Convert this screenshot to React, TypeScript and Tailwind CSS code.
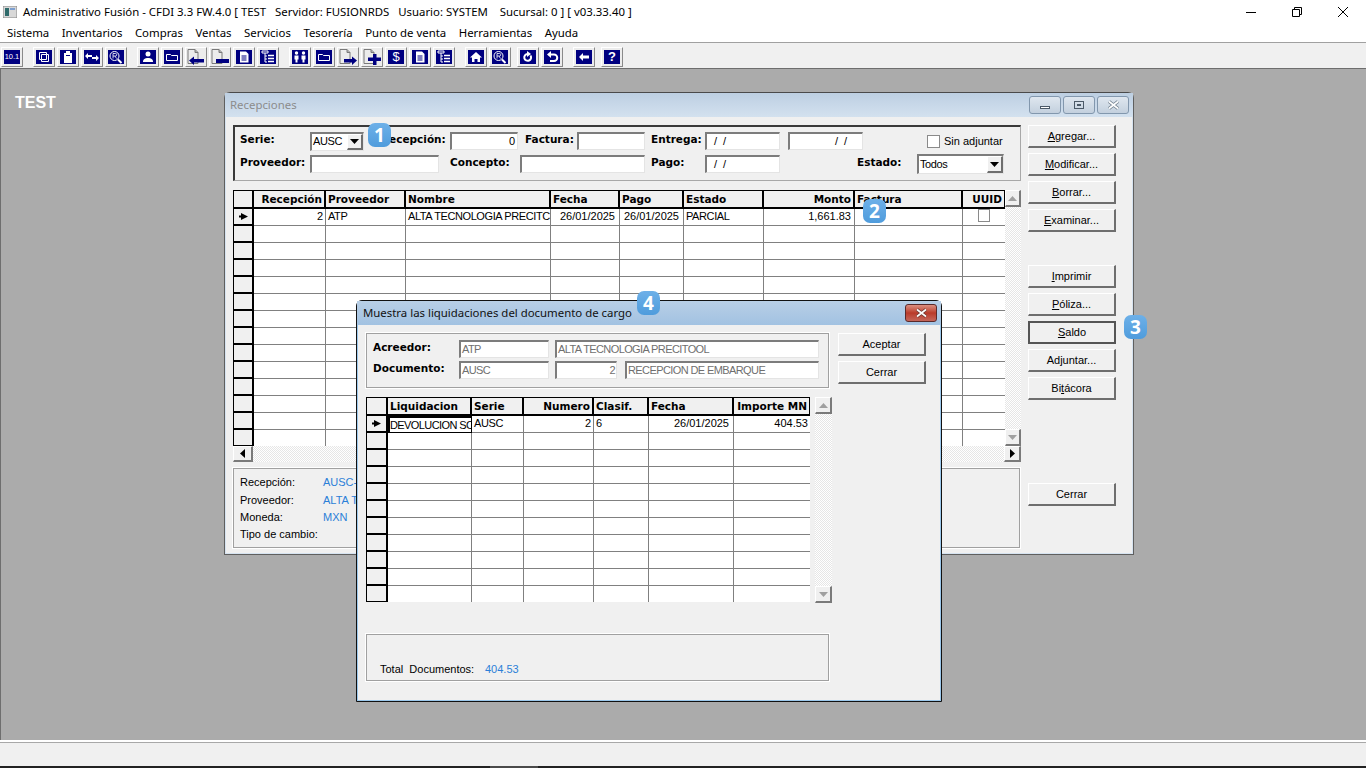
import type { ReactNode } from 'react';

const NAVY = '#000080';

type Col = { label: string; right?: boolean };

const mainCols: Col[] = [
  { label: 'Recepción', right: true },
  { label: 'Proveedor' },
  { label: 'Nombre' },
  { label: 'Fecha' },
  { label: 'Pago' },
  { label: 'Estado' },
  { label: 'Monto', right: true },
  { label: 'Factura' },
  { label: 'UUID', right: true },
];

const dlgCols: Col[] = [
  { label: 'Liquidacion' },
  { label: 'Serie' },
  { label: 'Numero', right: true },
  { label: 'Clasif.' },
  { label: 'Fecha' },
  { label: 'Importe MN', right: true },
];

// toolbar icons, navy tile with white strokes unless the icon is a page
function NavyTile({ children }: { children: ReactNode }) {
  return (
    <svg width="16" height="14" viewBox="0 0 16 14" fill="none">
      <rect width="16" height="14" fill={NAVY} />
      {children}
    </svg>
  );
}

function PageIcon({ kind }: { kind: 'left' | 'bar' | 'right' | 'plus' }) {
  return (
    <svg width="18" height="16" viewBox="0 0 18 16">
      <path d="M1 .5h7l3 3v11H1z" fill="#ececec" stroke="#7a7a7a" strokeWidth="1" />
      <path d="M8 .5v3h3" fill="#b0b0b0" stroke="#7a7a7a" strokeWidth="1" />
      {kind === 'left' && <path d="M2 11.5l5-4v2.5h10v3.5H7V16z" fill={NAVY} />}
      {kind === 'bar' && <rect x="5" y="10" width="13" height="4" fill={NAVY} />}
      {kind === 'right' && <path d="M18 11.5l-5-4v2.5H5v3.5h8V16z" fill={NAVY} />}
      {kind === 'plus' && <path d="M10 5h3.5v3.5H18V12h-4.5v4H10v-4H5V8.500h5z" fill={NAVY} />}
    </svg>
  );
}

const W = { stroke: '#fff', strokeWidth: 1 };

const icons: Record<string, ReactNode> = {
  ver: (
    <div className="flex h-[14px] w-[16px] items-center justify-center bg-[#000080] text-[7.5px] leading-none text-white">10.1</div>
  ),
  copy: (
    <NavyTile>
      <path d="M3.5 2.5h7v2h2v7h-7v-2h-2zM5.5 4.5h5v5h-5z" {...W} />
    </NavyTile>
  ),
  clip: (
    <NavyTile>
      <path d="M4 3h2V1h4v2h2v10H4z" fill="#fff" />
      <rect x="6" y="5" width="4" height="1" fill={NAVY} />
    </NavyTile>
  ),
  swap: (
    <NavyTile>
      <path d="M1 6l3-3v2h4v2H4v2zM15 8l-3-3v2H8v2h4v2z" fill="#fff" />
    </NavyTile>
  ),
  find: (
    <NavyTile>
      <circle cx="6.5" cy="6" r="4.5" {...W} />
      <path d="M5 8.5v-5h2.5a1 1 0 0 1 0 2.500H5M7 6l1.500 2.500" stroke="#fff" strokeWidth="0.8" />
      <path d="M10 9.5l3.500 3.500" stroke="#fff" strokeWidth="2" />
    </NavyTile>
  ),
  person: (
    <NavyTile>
      <circle cx="8" cy="4" r="2.5" fill="#fff" />
      <path d="M3 12c0-3 2-4 5-4s5 1 5 4z" fill="#fff" />
    </NavyTile>
  ),
  folder: (
    <NavyTile>
      <path d="M2.5 4.5v6h11v-5h-6l-1-1z" {...W} />
    </NavyTile>
  ),
  pageLeft: <PageIcon kind="left" />,
  pageBar: <PageIcon kind="bar" />,
  pageRight: <PageIcon kind="right" />,
  pagePlus: <PageIcon kind="plus" />,
  doc: (
    <NavyTile>
      <path d="M4 1.5h6l2.500 2.500v8.500H4z" fill="#fff" />
      <path d="M5.5 6h5M5.5 8h5M5.5 10h5" stroke={NAVY} />
    </NavyTile>
  ),
  tree: (
    <NavyTile>
      <path d="M2 1h6v2H2zM5 3v9M5 6h2M5 9h2M5 12h2" stroke="#fff" strokeWidth="1" />
      <path d="M8 5.5h6M8 8.500h6M8 11.500h6" stroke="#fff" strokeWidth="1.5" />
    </NavyTile>
  ),
  people: (
    <NavyTile>
      <circle cx="4.5" cy="3" r="1.7" fill="#fff" />
      <circle cx="11.5" cy="3" r="1.7" fill="#fff" />
      <path d="M2.5 5.500h4v4h-1v3h-2v-3h-1zM9.500 5.500h4v4h-1v3h-2v-3h-1z" fill="#fff" />
    </NavyTile>
  ),
  dollar: (
    <div className="flex h-[14px] w-[16px] items-center justify-center bg-[#000080] text-[13px] leading-none text-white">$</div>
  ),
  home: (
    <NavyTile>
      <path d="M8 2l6 5.500h-2V12H9.500V9h-3v3H4V7.500H2z" fill="#fff" />
    </NavyTile>
  ),
  redo: (
    <NavyTile>
      <path d="M10.5 5.500a3.400 3.400 0 1 1-3-1.500" stroke="#fff" strokeWidth="2" />
      <path d="M7 1l4 3-4 3z" fill="#fff" />
    </NavyTile>
  ),
  undo: (
    <NavyTile>
      <path d="M5 4.500h5a2.500 2.500 0 0 1 0 6.500H6" stroke="#fff" strokeWidth="2" />
      <path d="M7 1L3 4.500 7 8z" fill="#fff" />
    </NavyTile>
  ),
  back: (
    <NavyTile>
      <path d="M3 7l4-4v2.500h6v3H7V11z" fill="#fff" />
    </NavyTile>
  ),
  help: (
    <div className="flex h-[14px] w-[16px] items-center justify-center bg-[#000080] text-[13px] font-bold leading-none text-white">?</div>
  ),
};

const toolbarGroups: { ml: string; items: string[] }[] = [
  { ml: 'ml-0', items: ['ver'] },
  { ml: 'ml-2', items: ['copy', 'clip', 'swap', 'find'] },
  { ml: 'ml-2', items: ['person', 'folder', 'pageLeft', 'pageBar', 'doc', 'tree'] },
  { ml: 'ml-2', items: ['people', 'folder', 'pageRight', 'pagePlus', 'dollar', 'doc', 'tree'] },
  { ml: 'ml-2', items: ['home', 'find'] },
  { ml: 'ml-1', items: ['redo', 'undo'] },
  { ml: 'ml-2', items: ['back'] },
  { ml: 'ml-1', items: ['help'] },
];

function Triangle({ dir, grey }: { dir: 'up' | 'down' | 'left' | 'right'; grey?: boolean }) {
  const d = { up: 'M0 5L4.5 0 9 5z', down: 'M0 0h9L4.5 5z', left: 'M5 0v9L0 4.5z', right: 'M0 0v9l5-4.5z' }[dir];
  const vertical = dir === 'up' || dir === 'down';
  return (
    <svg width={vertical ? 9 : 5} height={vertical ? 5 : 9} viewBox={vertical ? '0 0 9 5' : '0 0 5 9'}>
      <path d={d} fill={grey ? '#a0a0a0' : '#000'} />
    </svg>
  );
}

function ScrollBtn({ dir, grey, className }: { dir: 'up' | 'down' | 'left' | 'right'; grey?: boolean; className: string }) {
  return (
    <div className={`flex shrink-0 items-center justify-center border-l border-t border-white border-r-2 border-b-2 border-r-[#7a7a7a] border-b-[#7a7a7a] bg-[#f0f0f0] ${className}`}>
      <Triangle dir={dir} grey={grey} />
    </div>
  );
}

function Hatch({ className }: { className: string }) {
  return <div className={`bg-[repeating-conic-gradient(#e6e6e6_0_25%,#ffffff_0_50%)] bg-[length:2px_2px] ${className}`} />;
}

function Btn({ children, focus, className = '' }: { children: ReactNode; focus?: boolean; className?: string }) {
  return (
    <div
      className={`flex h-[23px] w-[88px] items-center justify-center bg-[#f0f0f0] text-[11px] text-black ${
        focus
          ? 'border-2 border-[#555555]'
          : 'border-l border-t border-white border-r-2 border-b-2 border-r-[#6e6e6e] border-b-[#6e6e6e]'
      } ${className}`}
    >
      <span>{children}</span>
    </div>
  );
}

function Label({ w, children }: { w: string; children: ReactNode }) {
  return <div className={`${w} shrink-0 pb-[2px] font-['DejaVu_Sans'] text-[10.5px] font-bold text-black`}>{children}</div>;
}

function Input({ w, children, cls = '' }: { w: string; children?: ReactNode; cls?: string }) {
  return (
    <div className={`${w} flex h-[18px] shrink-0 items-center overflow-hidden whitespace-nowrap border-l-2 border-t-2 border-[#7c7c7c] border-r border-b border-r-[#e4e4e4] border-b-[#e4e4e4] bg-white text-[11px] ${cls}`}>
      {children}
    </div>
  );
}

function Combo({ w, h, text }: { w: string; h: string; text: string }) {
  return (
    <div className={`${w} ${h} flex shrink-0 items-center border-l-2 border-t-2 border-[#7c7c7c] border-r border-b border-r-[#e4e4e4] border-b-[#e4e4e4] bg-white text-[11px] tracking-[-0.4px]`}>
      <span className="flex-1 pl-[1px]">{text}</span>
      <div className="flex h-full w-[16px] items-center justify-center border-l border-t border-white border-r-2 border-b-2 border-r-[#6e6e6e] border-b-[#6e6e6e] bg-[#f0f0f0]">
        <Triangle dir="down" />
      </div>
    </div>
  );
}

function Cell({ right, children, cls = '' }: { right?: boolean; children?: ReactNode; cls?: string }) {
  return (
    <div className={`flex h-[17px] items-center overflow-hidden whitespace-nowrap border-b border-r border-[#808080] pb-[2px] pl-[2px] pr-[2px] text-[11px] ${right ? 'justify-end' : ''} ${cls}`}>
      {children}
    </div>
  );
}

function HeadRow({ cols, grid }: { cols: Col[]; grid: string }) {
  return (
    <div className={`grid h-[19px] ${grid} border-t border-black`}>
      <div className="border-b-2 border-r-2 border-black bg-[#f0f0f0]" />
      {cols.map((c) => (
        <div
          key={c.label}
          className={`flex items-center overflow-hidden whitespace-nowrap border-b-2 border-r-2 border-black bg-[#f0f0f0] pl-[2px] pr-[2px] pt-[1px] font-['DejaVu_Sans'] text-[10.5px] font-bold ${c.right ? 'justify-end' : ''}`}
        >
          {c.label}
        </div>
      ))}
    </div>
  );
}

function RowHead({ current }: { current?: boolean }) {
  return (
    <div className="flex h-[17px] items-center justify-center border-b-2 border-r-2 border-black bg-[#f0f0f0]">
      {current && (
        <svg width="9" height="7" viewBox="0 0 9 7">
          <path d="M0 2.5h2V0l7 3.5L2 7V4.5H0z" fill="#000" />
        </svg>
      )}
    </div>
  );
}

function EmptyRows({ count, grid, cols }: { count: number; grid: string; cols: number }) {
  return (
    <>
      {Array.from({ length: count }).map((_, r) => (
        <div key={r} className={`grid ${grid}`}>
          <RowHead />
          {Array.from({ length: cols }).map((_, c) => (
            <Cell key={c} cls={c === cols - 1 ? 'border-r-0' : ''} />
          ))}
        </div>
      ))}
    </>
  );
}

function Badge({ n, cls }: { n: number; cls: string }) {
  return (
    <div className={`absolute z-20 flex h-[24px] w-[23px] items-center justify-center rounded-[7px] bg-gradient-to-b from-[#6db0e8] to-[#4f9cdc] font-['Open_Sans'] text-[19px] font-bold text-white ${cls}`}>
      {n}
    </div>
  );
}

function Panel({ children, cls }: { children: ReactNode; cls: string }) {
  return <div className={`border border-[#a0a0a0] outline outline-1 outline-white ${cls}`}>{children}</div>;
}

function CloseGlyph({ outline }: { outline: string }) {
  return (
    <svg width="13" height="10" viewBox="0 0 13 10">
      <path d="M2 1.5l9 7M11 1.5l-9 7" stroke={outline} strokeWidth="3.4" />
      <path d="M2 1.5l9 7M11 1.5l-9 7" stroke="#fff" strokeWidth="1.6" />
    </svg>
  );
}

function MainWindow() {
  const grid = 'grid-cols-[20px_72px_80px_145px_69px_64px_80px_91px_108px_43px]';
  return (
    <div className="absolute left-[223px] top-[23px] h-[463px] w-[910px] rounded-t-[6px] border border-[#5f5f5f] border-t-[#4a4a4a] bg-[#d6e3f0] p-0">
      <div className="flex h-[24px] items-center justify-between bg-gradient-to-b from-[#bdcfe2] to-[#d3e1ef] pl-[5px] pr-[4px] text-[#8c8c8c]">
        <span className="font-['Noto_Sans'] text-[11.4px]">Recepciones</span>
        <div className="mb-[1px] flex gap-[2px]">
          {['min', 'max', 'close'].map((k) => (
            <div key={k} className="flex h-[18px] w-[32px] items-center justify-center rounded-[3px] border border-[#8297ad] bg-gradient-to-b from-[#dfe7ef] to-[#c3d0de]">
              {k === 'min' && <div className="mt-[6px] h-[3px] w-[10px] border border-[#4c5a68] bg-white" />}
              {k === 'max' && (
                <div className="flex h-[8px] w-[10px] items-center justify-center border border-[#4c5a68]">
                  <div className="h-[2px] w-[4px] bg-[#4c5a68]" />
                </div>
              )}
              {k === 'close' && <CloseGlyph outline="#71808f" />}
            </div>
          ))}
        </div>
      </div>

      <div className="mx-[1px] flex h-[436px] bg-[#f0f0f0] pl-[7px] pt-[8px]">
        <div className="w-[788px] shrink-0">
          {/* filtros */}
          <div className="h-[56px] border-l-2 border-t-2 border-[#3a3a3a] border-r border-b border-r-[#a8a8a8] border-b-[#a8a8a8] pl-[5px] pt-[5px]">
            <div className="flex h-[18px] items-center">
              <Label w="w-[70px]">Serie:</Label>
              <Combo w="w-[54px]" h="h-[19px]" text="AUSC" />
              <Label w="w-[69px] ml-[17px]">Recepción:</Label>
              <Input w="w-[68px]" cls="justify-end pr-[2px]">0</Input>
              <Label w="w-[52px] ml-[7px]">Factura:</Label>
              <Input w="w-[68px]" />
              <Label w="w-[54px] ml-[6px]">Entrega:</Label>
              <Input w="w-[75px]" cls="pl-[7px] tracking-[1.5px]">/ /</Input>
              <Input w="w-[75px] ml-[8px]" cls="pl-[45px] tracking-[1.5px]">/ /</Input>
              <div className="ml-[64px] h-[13px] w-[13px] border border-[#8a8a8a] bg-white" />
              <span className="ml-[4px] pt-[1px] text-[11px]">Sin adjuntar</span>
            </div>
            <div className="mt-[5px] flex h-[18px] items-center">
              <Label w="w-[70px]">Proveedor:</Label>
              <Input w="w-[129px]" />
              <Label w="w-[70px] ml-[11px]">Concepto:</Label>
              <Input w="w-[125px]" />
              <Label w="w-[54px] ml-[6px]">Pago:</Label>
              <Input w="w-[75px]" cls="pl-[7px] tracking-[1.5px]">/ /</Input>
              <Label w="w-[60px] ml-[77px]">Estado:</Label>
              <Combo w="w-[87px]" h="h-[20px]" text="Todos" />
            </div>
          </div>

          {/* rejilla */}
          <div className="mt-[9px] h-[272px]">
            <div className="flex h-[256px]">
              <div className="h-[256px] w-[772px] shrink-0 overflow-hidden border-l border-black bg-white">
                <HeadRow cols={mainCols} grid={grid} />
                <div className={`grid ${grid}`}>
                  <RowHead current />
                  <Cell right>2</Cell>
                  <Cell cls="tracking-[-0.4px]">ATP</Cell>
                  <Cell cls="tracking-[-0.4px]">ALTA TECNOLOGIA PRECITC</Cell>
                  <Cell right cls="pr-[4px]!">26/01/2025</Cell>
                  <Cell right cls="pr-[4px]!">26/01/2025</Cell>
                  <Cell cls="tracking-[-0.4px]">PARCIAL</Cell>
                  <Cell right cls="pr-[3px]!">1,661.83</Cell>
                  <Cell />
                  <Cell cls="border-r-0 justify-center pb-0!">
                    <div className="mb-[3px] mr-[2px] h-[13px] w-[12px] border border-[#8a8a8a] bg-white" />
                  </Cell>
                </div>
                <EmptyRows count={14} grid={grid} cols={9} />
              </div>
              <div className="flex w-[16px] flex-col">
                <ScrollBtn dir="up" grey className="h-[17px] w-[16px]" />
                <Hatch className="flex-1" />
                <ScrollBtn dir="down" grey className="h-[17px] w-[16px]" />
              </div>
            </div>
            <div className="flex h-[16px]">
              <ScrollBtn dir="left" className="h-[16px] w-[20px]" />
              <Hatch className="flex-1" />
              <ScrollBtn dir="right" className="h-[16px] w-[17px]" />
            </div>
          </div>

          {/* totales */}
          <Panel cls="mt-[6px] h-[80px] w-[787px] pl-[6px] pt-[5px] text-[11px]">
            {[
              ['Recepción:', 'AUSC-'],
              ['Proveedor:', 'ALTA T'],
              ['Moneda:', 'MXN'],
              ['Tipo de cambio:', ''],
            ].map(([k, v]) => (
              <div key={k} className="flex h-[17.3px] items-center">
                <span className="w-[83px]">{k}</span>
                <span className="text-[#2b7fd8]">{v}</span>
              </div>
            ))}
          </Panel>
        </div>

        {/* botones */}
        <div className="ml-[7px] flex w-[88px] flex-col">
          <Btn><u>A</u>gregar...</Btn>
          <Btn className="mt-[5px]"><u>M</u>odificar...</Btn>
          <Btn className="mt-[5px]"><u>B</u>orrar...</Btn>
          <Btn className="mt-[5px]"><u>E</u>xaminar...</Btn>
          <Btn className="mt-[33px]"><u>I</u>mprimir</Btn>
          <Btn className="mt-[5px]"><u>P</u>óliza...</Btn>
          <Btn focus className="mt-[5px]"><u>S</u>aldo</Btn>
          <Btn className="mt-[5px]">Adjuntar...</Btn>
          <Btn className="mt-[5px]">Bi<u>t</u>ácora</Btn>
          <Btn className="mt-[83px]">Cerrar</Btn>
        </div>
      </div>
    </div>
  );
}

function Dialog() {
  const grid = 'grid-cols-[21px_84px_52px_70px_55px_85px_77px]';
  const disabled = 'px-[1px] text-[#6f6f6f] tracking-[-0.6px]';
  return (
    <div className="absolute left-[355px] top-[231px] z-10 h-[402px] w-[586px] rounded-t-[6px] border border-[#111111] bg-[#9cc8ec]">
      <div className="flex h-[24px] items-center justify-between bg-gradient-to-b from-[#b8cfe6] to-[#a2c2e2] pl-[6px] pr-[4px] text-[#111111]">
        <span className="font-['Noto_Sans'] text-[11.4px]">Muestra las liquidaciones del documento de cargo</span>
        <div className="flex h-[18px] w-[32px] items-center justify-center rounded-[3px] border border-[#5a2a2a] bg-gradient-to-b from-[#dc8f80] via-[#b93a2a] to-[#c4665a]">
          <CloseGlyph outline="#6e3a34" />
        </div>
      </div>

      <div className="mx-[1px] flex h-[375px] bg-[#f0f0f0] pl-[8px] pt-[8px]">
        <div className="w-[466px] shrink-0">
          <Panel cls="h-[55px] w-[463px] pl-[6px] pt-[6px]">
            <div className="flex h-[18px] items-center">
              <Label w="w-[86px]">Acreedor:</Label>
              <Input w="w-[90px]" cls={disabled}>ATP</Input>
              <Input w="w-[264px] ml-[6px]" cls={disabled}>ALTA TECNOLOGIA PRECITOOL</Input>
            </div>
            <div className="mt-[3px] flex h-[18px] items-center">
              <Label w="w-[86px]">Documento:</Label>
              <Input w="w-[90px]" cls={disabled}>AUSC</Input>
              <Input w="w-[62px] ml-[6px]" cls={`${disabled} justify-end`}>2</Input>
              <Input w="w-[194px] ml-[8px]" cls={disabled}>RECEPCION DE EMBARQUE</Input>
            </div>
          </Panel>

          <div className="mt-[9px] flex h-[206px]">
            <div className="h-[205px] w-[444px] shrink-0 overflow-hidden border-l border-black bg-white">
              <HeadRow cols={dlgCols} grid={grid} />
              <div className={`grid ${grid}`}>
                <RowHead current />
                <Cell cls="border-2 border-black pb-0! pl-[0px]! pr-0! tracking-[-0.6px]">DEVOLUCION SC</Cell>
                <Cell cls="tracking-[-0.4px]">AUSC</Cell>
                <Cell right>2</Cell>
                <Cell>6</Cell>
                <Cell right cls="pr-[4px]!">26/01/2025</Cell>
                <Cell right cls="border-r-0 pr-[3px]!">404.53</Cell>
              </div>
              <EmptyRows count={11} grid={grid} cols={6} />
            </div>
            <div className="ml-[5px] flex w-[17px] flex-col">
              <ScrollBtn dir="up" grey className="h-[17px] w-[17px]" />
              <Hatch className="flex-1" />
              <ScrollBtn dir="down" grey className="h-[17px] w-[17px]" />
            </div>
          </div>

          <Panel cls="mt-[31px] flex h-[47px] w-[463px] items-end pb-[3px] pl-[13px] text-[11px]">
            <span className="w-[105px]">Total&nbsp; Documentos:</span>
            <span className="text-[#2b7fd8]">404.53</span>
          </Panel>
        </div>

        <div className="ml-[6px] flex flex-col gap-[5px]">
          <Btn>Aceptar</Btn>
          <Btn>Cerrar</Btn>
        </div>
      </div>
    </div>
  );
}

export default function App() {
  return (
    <div className="flex h-[768px] w-[1366px] flex-col overflow-hidden bg-[#f0f0f0] font-['Liberation_Sans',sans-serif] text-black">
      {/* barra de titulo */}
      <div className="flex h-[24px] shrink-0 items-center bg-white pl-[3px]">
        <svg width="14" height="12" viewBox="0 0 14 12">
          <rect width="14" height="12" fill="#d8d8d8" stroke="#888" />
          <rect x="2" y="2" width="4" height="8" fill="#2f6b6b" />
          <rect x="7" y="2" width="5" height="2" fill="#7d9fd0" />
        </svg>
        <span className="ml-[6px] font-['Noto_Sans'] text-[11.4px]">Administrativo Fusión - CFDI 3.3 FW.4.0 [ TEST&nbsp; &nbsp;Servidor: FUSIONRDS&nbsp; &nbsp;Usuario: SYSTEM&nbsp; &nbsp; Sucursal: 0 ] [ v03.33.40 ]</span>
        <div className="ml-auto flex pr-[-2px]">
          <div className="flex h-[20px] w-[46px] items-center justify-center">
            <div className="h-[1px] w-[10px] bg-black" />
          </div>
          <div className="flex h-[20px] w-[46px] items-center justify-center">
            <svg width="10" height="10" viewBox="0 0 10 10" fill="none">
              <path d="M.5 2.5h7v7h-7zM2.5 2.500v-2h7v7h-2" stroke="#000" />
            </svg>
          </div>
          <div className="flex h-[20px] w-[46px] items-center justify-center">
            <svg width="10" height="10" viewBox="0 0 10 10" fill="none">
              <path d="M0 0l10 10M10 0L0 10" stroke="#000" />
            </svg>
          </div>
        </div>
      </div>

      {/* menu */}
      <div className="flex h-[19px] shrink-0 items-center gap-[12.5px] border-b border-[#a0a0a0] bg-white pl-[7px] font-['Noto_Sans'] text-[11.4px]">
        {['Sistema', 'Inventarios', 'Compras', 'Ventas', 'Servicios', 'Tesorería', 'Punto de venta', 'Herramientas', 'Ayuda'].map((m) => (
          <span key={m}>{m}</span>
        ))}
      </div>

      {/* herramientas */}
      <div className="flex h-[25px] shrink-0 items-center bg-[#f0f0f0] pt-[2px]">
        {toolbarGroups.map((g, i) => (
          <div key={i} className={`flex ${g.ml}`}>
            {g.items.map((name, j) => (
              <div key={j} className="flex h-[21px] w-[24px] items-center justify-center">
                <div className="flex h-[20px] w-[22px] items-center justify-center border-l border-t border-white border-r border-b border-r-[#8a8a8a] border-b-[#8a8a8a] bg-[#ececec]">
                  {icons[name]}
                </div>
              </div>
            ))}
          </div>
        ))}
      </div>

      {/* escritorio */}
      <div className="relative flex-1 border-l border-t border-[#6e6e6e] bg-[#ababab]">
        <div className="pl-[14px] pt-[22px] text-[16px] font-bold text-white">TEST</div>
        <MainWindow />
        <Dialog />
        <Badge n={1} cls="left-[367px] top-[54px]" />
        <Badge n={2} cls="left-[862px] top-[130px]" />
        <Badge n={3} cls="left-[1123px] top-[246px]" />
        <Badge n={4} cls="left-[636px] top-[222px]" />
      </div>

      {/* estado */}
      <div className="h-[26px] shrink-0 border-t-2 border-white shadow-[inset_0_1px_0_#a8a8a8]" />
      <div className="flex h-[2px] shrink-0 bg-[#222222]">
        <div className="ml-[490px] w-[48px] bg-[#4a4a4a]" />
      </div>
    </div>
  );
}
